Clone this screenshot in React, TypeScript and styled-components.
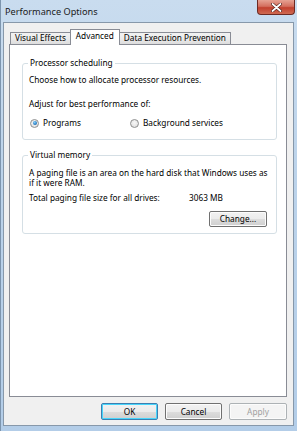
import React from "react";
import styled, { createGlobalStyle } from "styled-components";

const FS = "8.25px";

const Global = createGlobalStyle`
  html, body { margin: 0; padding: 0; background: #ffffff; }
  body { font-family: "Noto Sans", "Open Sans", sans-serif; }
`;

const Window = styled.div`
  width: 297px;
  height: 431px;
  box-sizing: border-box;
  display: flex;
  flex-direction: column;
  background: linear-gradient(180deg, #c9dcef 0%, #bcd3ea 40%, #b3cde8 100%);
  border-left: 1px solid #7d95ae;
  overflow: hidden;
`;

const TitleBar = styled.div`
  height: 21px;
  flex: none;
  display: flex;
  align-items: center;
  justify-content: space-between;
  padding-left: 4px;
  padding-right: 2px;
`;

const Title = styled.span`
  font-size: 9.2px;
  color: #1a1a1a;
  padding-top: 2px;
`;

const CloseButton = styled.div`
  align-self: flex-start;
  width: 38px;
  height: 15px;
  box-sizing: border-box;
  border: 1px solid #6d2a23;
  border-top: none;
  border-radius: 0 0 4px 4px;
  background: linear-gradient(180deg, #e6a293 0%, #d46f5e 45%, #c2402e 55%, #cf6a52 100%);
  display: flex;
  align-items: center;
  justify-content: center;
`;

const Client = styled.div`
  flex: 1;
  margin: 1px 3px 5px 2px;
  border: 1px solid #8798aa;
  background: #f0f0f0;
  display: flex;
  flex-direction: column;
  padding: 6px 6px 0 5px;
`;

const TabStrip = styled.div`
  display: flex;
  align-items: flex-end;
  height: 15px;
  padding-left: 1px;
  position: relative;
  z-index: 1;
`;

const Tab = styled.div<{ $active?: boolean }>`
  box-sizing: border-box;
  height: ${(p) => (p.$active ? "16px" : "12px")};
  margin-bottom: ${(p) => (p.$active ? "-1px" : "0")};
  margin-left: ${(p) => (p.$active ? "-1px" : "0")};
  margin-right: ${(p) => (p.$active ? "-1px" : "0")};
  padding: ${(p) => (p.$active ? "1px 5px 0" : "0 4px")};
  border: 1px solid #898c95;
  border-bottom: none;
  background: ${(p) => (p.$active ? "#ffffff" : "linear-gradient(180deg, #f2f2f2 0%, #ebebeb 50%, #dddddd 100%)")};
  font-size: ${FS};
  line-height: 10px;
  color: #000;
  white-space: nowrap;
  position: relative;
  z-index: ${(p) => (p.$active ? 2 : 1)};
  & + & { border-left: ${(p) => (p.$active ? "1px solid #898c95" : "none")}; }
`;

const Panel = styled.div`
  height: 353px;
  box-sizing: border-box;
  border: 1px solid #898c95;
  background: #ffffff;
  padding: 13px 9px 0 12px;
  display: flex;
  flex-direction: column;
  gap: 10px;
`;

const Group = styled.fieldset<{ $h: number }>`
  margin: 0;
  height: ${(p) => p.$h}px;
  box-sizing: border-box;
  border: 1px solid #d5dfe5;
  border-radius: 3px;
  padding: 0 9px 0 6px;
  display: flex;
  flex-direction: column;
  min-width: 0;
`;

const Legend = styled.legend`
  font-size: ${FS};
  line-height: 10px;
  padding: 0 2px;
  margin-left: -1px;
  color: #000;
`;

const Text = styled.div<{ $mt?: number }>`
  font-size: ${FS};
  line-height: 10px;
  color: #000;
  margin-top: ${(p) => p.$mt ?? 0}px;
  white-space: nowrap;
`;

const RadioRow = styled.div`
  display: flex;
  align-items: center;
  margin-top: 9px;
  padding-left: 1px;
`;

const RadioItem = styled.label<{ $w?: number }>`
  display: flex;
  align-items: center;
  gap: 4px;
  width: ${(p) => (p.$w ? `${p.$w}px` : "auto")};
  font-size: ${FS};
  line-height: 10px;
`;

const RadioCircle = styled.span<{ $on?: boolean }>`
  width: 9px;
  height: 9px;
  box-sizing: border-box;
  border-radius: 50%;
  border: 1px solid #8e8f8f;
  background: radial-gradient(circle at 50% 40%, #f8f8f8 0%, #dcdcdc 100%);
  display: flex;
  align-items: center;
  justify-content: center;
  &::after {
    content: "";
    display: ${(p) => (p.$on ? "block" : "none")};
    width: 4px;
    height: 4px;
    border-radius: 50%;
    background: radial-gradient(circle at 40% 35%, #7fd0ff 0%, #1f6fb5 70%, #17508a 100%);
  }
`;

const InfoRow = styled.div`
  display: flex;
  margin-top: 5px;
`;

const Label = styled.span`
  font-size: ${FS};
  line-height: 10px;
  width: 160px;
`;

const Value = styled.span`
  font-size: ${FS};
  line-height: 10px;
`;

const ButtonRight = styled.div`
  display: flex;
  justify-content: flex-end;
  margin-top: 8px;
`;

const Button = styled.button<{ $w: number; $h: number; $focus?: boolean; $disabled?: boolean }>`
  width: ${(p) => p.$w}px;
  height: ${(p) => p.$h}px;
  box-sizing: border-box;
  padding: 0;
  border-radius: 2px;
  border: 1px solid ${(p) => (p.$disabled ? "#adb2b5" : p.$focus ? "#3c7fb1" : "#707070")};
  background: ${(p) =>
    p.$disabled
      ? "#f4f4f4"
      : "linear-gradient(180deg, #f2f2f2 0%, #ebebeb 50%, #dddddd 51%, #cfcfcf 100%)"};
  box-shadow: ${(p) => (p.$focus ? "inset 0 0 0 1px #48d5fb" : "inset 0 0 0 1px #fcfcfc")};
  font-family: "Noto Sans", "Open Sans", sans-serif;
  font-size: ${FS};
  line-height: 10px;
  color: ${(p) => (p.$disabled ? "#a0a0a0" : "#000")};
`;

const Footer = styled.div`
  display: flex;
  justify-content: flex-end;
  gap: 7px;
  padding-top: 6px;
`;

export default function App() {
  return (
    <>
      <Global />
      <Window>
        <TitleBar>
          <Title>Performance Options</Title>
          <CloseButton>
            <svg width="11" height="9" viewBox="0 0 11 9">
              <path d="M1.5 1 L9.5 8 M9.5 1 L1.5 8" stroke="#4a1a14" strokeWidth="3" strokeLinecap="round" />
              <path d="M1.5 1 L9.5 8 M9.5 1 L1.5 8" stroke="#ffffff" strokeWidth="1.8" strokeLinecap="round" />
            </svg>
          </CloseButton>
        </TitleBar>
        <Client>
          <TabStrip>
            <Tab>Visual Effects</Tab>
            <Tab $active>Advanced</Tab>
            <Tab>Data Execution Prevention</Tab>
          </TabStrip>
          <Panel>
            <Group $h={82}>
              <Legend>Processor scheduling</Legend>
              <Text $mt={7}>Choose how to allocate processor resources.</Text>
              <Text $mt={14}>Adjust for best performance of:</Text>
              <RadioRow>
                <RadioItem $w={100}>
                  <RadioCircle $on />
                  Programs
                </RadioItem>
                <RadioItem>
                  <RadioCircle />
                  Background services
                </RadioItem>
              </RadioRow>
            </Group>
            <Group $h={84}>
              <Legend>Virtual memory</Legend>
              <Text $mt={8}>A paging file is an area on the hard disk that Windows uses as</Text>
              <Text>if it were RAM.</Text>
              <InfoRow>
                <Label>Total paging file size for all drives:</Label>
                <Value>3063 MB</Value>
              </InfoRow>
              <ButtonRight>
                <Button $w={58} $h={16}>Change...</Button>
              </ButtonRight>
            </Group>
          </Panel>
          <Footer>
            <Button $w={57} $h={17} $focus>OK</Button>
            <Button $w={57} $h={17}>Cancel</Button>
            <Button $w={58} $h={17} $disabled>Apply</Button>
          </Footer>
        </Client>
      </Window>
    </>
  );
}
